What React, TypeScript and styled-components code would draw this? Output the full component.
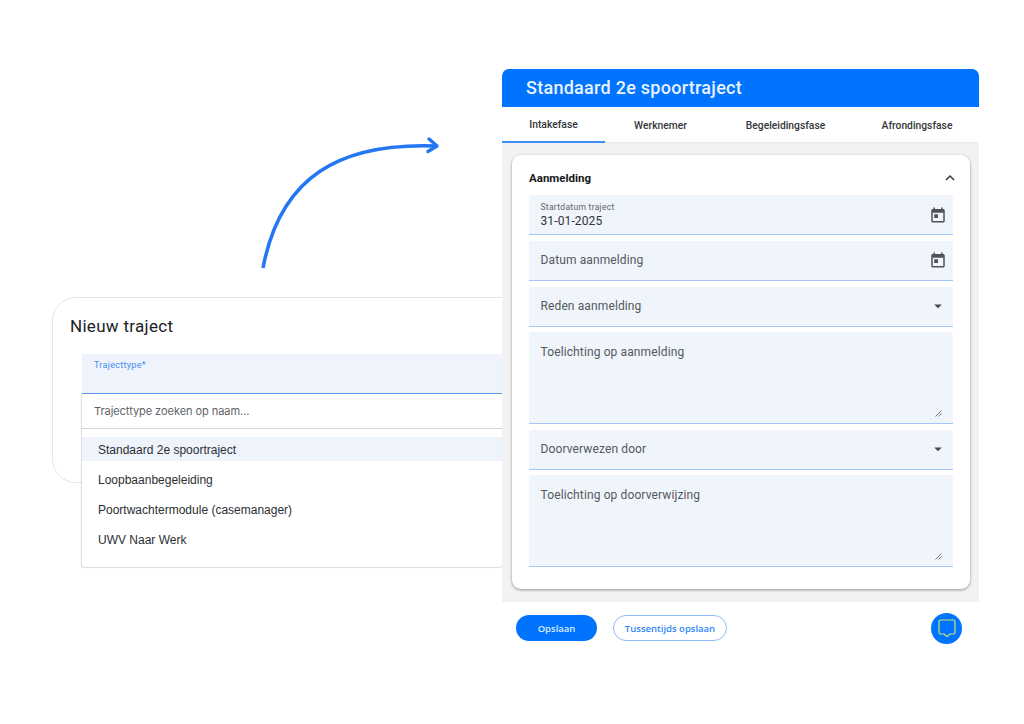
import styled, { createGlobalStyle } from "styled-components";

const GlobalStyle = createGlobalStyle`
    html, body {
        margin: 0;
        padding: 0;
        background: #ffffff;
    }
`

const Canvas = styled.div`
    position: relative;
    width: 1024px;
    height: 724px;
    overflow: hidden;
    background: #ffffff;
    font-family: Roboto, "Liberation Sans", sans-serif;
`

const Arrow = styled.svg`
    position: absolute;
    left: 250px;
    top: 130px;
`

/* left window */
const NewWindow = styled.div`
    position: absolute;
    left: 52px;
    top: 297px;
    width: 500px;
    height: 186px;
    box-sizing: border-box;
    border: 1px solid #e3e5e6;
    border-radius: 24px;
    background: #ffffff;
    padding: 17px 17px 0;
`

const WindowTitle = styled.div`
    font-size: 17px;
    line-height: 22px;
    font-weight: 400;
    letter-spacing: 0.3px;
    color: #202124;
`

const Dropdown = styled.div`
    position: absolute;
    left: 82px;
    top: 354px;
    width: 420px;
    display: flex;
    flex-direction: column;
`

const TypeField = styled.div`
    height: 40px;
    box-sizing: border-box;
    padding: 5px 12px 0;
    background: #eef3fc;
    border-bottom: 1px solid #5b97f0;
    font-size: 9px;
    line-height: 12px;
    letter-spacing: 0.3px;
    color: #4a8df5;
`

const DropdownBody = styled.div`
    height: 173px;
    background: #ffffff;
    border-radius: 0 0 3px 3px;
    box-shadow: -0.5px 0.5px 1px rgba(0, 0, 0, 0.14);
`

const SearchRow = styled.div`
    height: 35px;
    box-sizing: border-box;
    display: flex;
    align-items: center;
    padding: 0 12px;
    border-bottom: 1px solid #d4d6d8;
    font-family: Inter, Roboto, sans-serif;
    font-size: 11px;
    letter-spacing: -0.05px;
    color: #5f6368;
`

const OptionList = styled.div`
    display: flex;
    flex-direction: column;
    gap: 6px;
    padding-top: 8px;
`

const Option = styled.div<{ selected?: boolean }>`
    height: 24px;
    box-sizing: border-box;
    padding-top: 1px;
    display: flex;
    align-items: center;
    padding-left: 16px;
    font-family: "Liberation Sans", Arial, sans-serif;
    font-size: 12px;
    color: #2b2f33;
    background: ${({ selected }) => (selected ? "#eef3fc" : "transparent")};
`

/* right window */
const TrajectWindow = styled.div`
    position: absolute;
    left: 502px;
    top: 69px;
    width: 477px;
    display: flex;
    flex-direction: column;
    background: #ffffff;
`

const Header = styled.div`
    height: 38px;
    box-sizing: border-box;
    display: flex;
    align-items: center;
    padding: 0 24px 2px;
    background: #0074ff;
    border-radius: 7px 7px 0 0;
    color: #e9f3ff;
    font-size: 18px;
    font-weight: 500;
    letter-spacing: 0.27px;
`

const Tabs = styled.div`
    height: 36px;
    box-sizing: border-box;
    display: grid;
    grid-template-columns: 103px 111px 139px 124px;
    border-bottom: 1px solid #e4ebf5;
`

const Tab = styled.div<{ active?: boolean }>`
    display: flex;
    align-items: center;
    justify-content: center;
    height: 36px;
    box-sizing: border-box;
    font-size: 10.3px;
    font-weight: 500;
    color: #33363a;
    border-bottom: ${({ active }) => (active ? "2px solid #3d8ff5" : "none")};
`

const Body = styled.div`
    height: 459px;
    box-sizing: border-box;
    padding: 12px 9px 0 10px;
    background: #f2f2f2;
`

const Card = styled.div`
    height: 434px;
    box-sizing: border-box;
    padding: 0 17px;
    background: #ffffff;
    border-radius: 9px;
    box-shadow: 0 1px 3px rgba(0, 0, 0, 0.4);
`

const CardHead = styled.div`
    height: 40px;
    display: flex;
    align-items: center;
    justify-content: space-between;
    padding: 6px 0 0;
    box-sizing: border-box;
    font-size: 11.5px;
    font-weight: 700;
    color: #17191c;
`

const Chevron = styled.svg`
    margin-right: -5px;
`

const Fields = styled.div`
    display: flex;
    flex-direction: column;
    gap: 5.8px;
`

const Field = styled.div<{ tall?: boolean }>`
    position: relative;
    height: ${({ tall }) => (tall ? "91.5px" : "40px")};
    box-sizing: border-box;
    display: flex;
    justify-content: space-between;
    align-items: ${({ tall }) => (tall ? "flex-start" : "center")};
    padding: ${({ tall }) => (tall ? "13px 6px 0 11.5px" : "0 6px 0 11.5px")};
    background: #f0f4fb;
    border-bottom: 1px solid #a3c6fa;
    border-radius: 3px 3px 0 0;
    font-size: 12px;
    letter-spacing: 0.12px;
    color: #55595e;
`

const FilledText = styled.div`
    display: flex;
    flex-direction: column;
    gap: 1px;
`

const SmallLabel = styled.span`
    font-size: 8.5px;
    line-height: 11px;
    letter-spacing: 0.3px;
    color: #5f6368;
`

const FilledValue = styled.span`
    font-size: 12px;
    line-height: 14px;
    letter-spacing: 0.12px;
    color: #303338;
`

const Grip = styled.svg`
    position: absolute;
    right: 11px;
    bottom: 6px;
`

const Footer = styled.div`
    height: 52px;
    display: flex;
    align-items: center;
    gap: 16px;
    padding: 0 17px 0 14px;
    font-family: "Open Sans", Inter, sans-serif;
    font-size: 9.5px;
    font-weight: 600;
`

const Button = styled.div<{ outline?: boolean }>`
    height: 26px;
    box-sizing: border-box;
    display: flex;
    align-items: center;
    justify-content: center;
    border-radius: 13px;
    width: ${({ outline }) => (outline ? "114px" : "81px")};
    background: ${({ outline }) => (outline ? "#ffffff" : "#0074ff")};
    color: ${({ outline }) => (outline ? "#2f86f6" : "#dcebff")};
    border: ${({ outline }) => (outline ? "1px solid #8dbcf8" : "none")};
`

const ChatButton = styled.div`
    width: 31px;
    height: 31px;
    margin-left: auto;
    display: flex;
    align-items: center;
    justify-content: center;
    border-radius: 50%;
    background: #0074ff;
`

function CalendarIcon() {
    return (
        <svg width="18" height="18" viewBox="0 0 24 24" fill="#50545a">
            <path d="M19 4h-1V2h-2v2H8V2H6v2H5c-1.1 0-2 .9-2 2v14c0 1.1.9 2 2 2h14c1.1 0 2-.9 2-2V6c0-1.1-.9-2-2-2zm0 16H5V9h14v11z" />
            <rect x="7" y="11" width="5" height="5" />
        </svg>
    );
}

function CaretIcon() {
    return (
        <svg width="18" height="18" viewBox="0 0 24 24" fill="#45484d">
            <path d="M7 10l5 5 5-5z" />
        </svg>
    );
}

function ResizeGrip() {
    return (
        <Grip width="7" height="7" viewBox="0 0 7 7" stroke="#66696e" strokeWidth="0.9">
            <path d="M0.5 6.5L6.5 0.5M3.5 6.500L6.5 3.500" />
        </Grip>
    );
}

function App() {
    return (
        <Canvas>
            <GlobalStyle />
            <Arrow width="200" height="145" viewBox="0 0 200 145" fill="none" stroke="#2376f4" strokeWidth="3.5" strokeLinecap="round" strokeLinejoin="round">
                <path strokeLinecap="butt" d="M13 138C30 48 88 12 187 16" />
                <path strokeWidth="3.4" d="M179 9L187 16L178 21.500" />
            </Arrow>

            <NewWindow>
                <WindowTitle>Nieuw traject</WindowTitle>
            </NewWindow>
            <Dropdown>
                <TypeField>Trajecttype*</TypeField>
                <DropdownBody>
                    <SearchRow>Trajecttype zoeken op naam...</SearchRow>
                    <OptionList>
                        <Option selected>Standaard 2e spoortraject</Option>
                        <Option>Loopbaanbegeleiding</Option>
                        <Option>Poortwachtermodule (casemanager)</Option>
                        <Option>UWV Naar Werk</Option>
                    </OptionList>
                </DropdownBody>
            </Dropdown>

            <TrajectWindow>
                <Header>Standaard 2e spoortraject</Header>
                <Tabs>
                    <Tab active>Intakefase</Tab>
                    <Tab>Werknemer</Tab>
                    <Tab>Begeleidingsfase</Tab>
                    <Tab>Afrondingsfase</Tab>
                </Tabs>
                <Body>
                    <Card>
                        <CardHead>
                            Aanmelding
                            <Chevron width="16" height="16" viewBox="0 0 24 24" fill="none" stroke="#33363a" strokeWidth="2.2">
                                <path d="M6 15l6-6 6 6" />
                            </Chevron>
                        </CardHead>
                        <Fields>
                            <Field>
                                <FilledText>
                                    <SmallLabel>Startdatum traject</SmallLabel>
                                    <FilledValue>31-01-2025</FilledValue>
                                </FilledText>
                                <CalendarIcon />
                            </Field>
                            <Field>
                                Datum aanmelding
                                <CalendarIcon />
                            </Field>
                            <Field>
                                Reden aanmelding
                                <CaretIcon />
                            </Field>
                            <Field tall>
                                Toelichting op aanmelding
                                <ResizeGrip />
                            </Field>
                            <Field>
                                Doorverwezen door
                                <CaretIcon />
                            </Field>
                            <Field tall>
                                Toelichting op doorverwijzing
                                <ResizeGrip />
                            </Field>
                        </Fields>
                    </Card>
                </Body>
                <Footer>
                    <Button>Opslaan</Button>
                    <Button outline>Tussentijds opslaan</Button>
                    <ChatButton>
                        <svg width="22" height="22" viewBox="0 0 22 22" fill="none" stroke="#c9e86a" strokeWidth="1.2" strokeLinejoin="round">
                            <path d="M4.5 3h13a1.5 1.5 0 0 1 1.5 1.5v11a1.5 1.5 0 0 1-1.5 1.5H14l-3 2.6L8 17H4.5A1.5 1.5 0 0 1 3 15.500v-11A1.500 1.500 0 0 1 4.500 3z" />
                        </svg>
                    </ChatButton>
                </Footer>
            </TrajectWindow>
        </Canvas>
    );
}

export default App;
